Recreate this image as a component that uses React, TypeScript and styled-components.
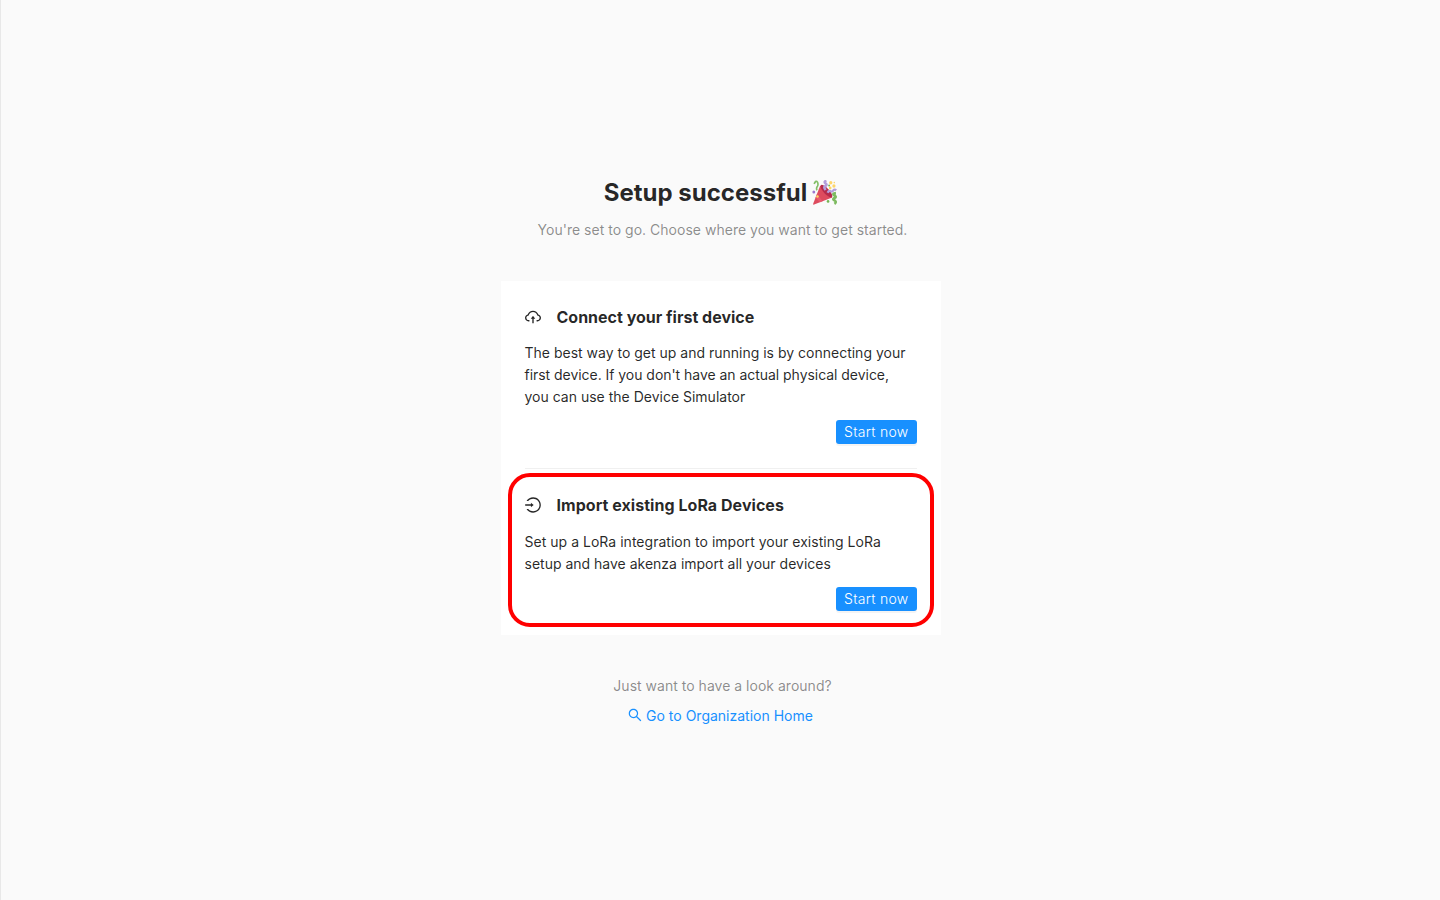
import React from 'react';
import styled, { createGlobalStyle } from 'styled-components';
import { AiOutlineCloudUpload, AiOutlineLogin, AiOutlineSearch } from 'react-icons/ai';

const GlobalStyle = createGlobalStyle`
  *, *::before, *::after { box-sizing: border-box; }
  body {
    margin: 0;
    background: #fafafa;
    color: rgba(0, 0, 0, 0.85);
    font-family: Inter, "Liberation Sans", sans-serif;
    font-size: 14px;
    line-height: 22px;
  }
`;

const Page = styled.main`
  height: 100vh;
  padding-top: 174px;
  border-left: 1px solid #e8e8e8;
  display: flex;
  flex-direction: column;
  align-items: center;
`;

const Title = styled.h1`
  margin: 0;
  height: 38px;
  display: flex;
  align-items: center;
  gap: 5px;
  font-size: 24px;
  line-height: 38px;
  font-weight: 700;
`;

const PartyIcon = styled.svg`
  width: 25px;
  height: 26px;
  display: block;
`;

const Muted = styled.p<{ $top: number }>`
  margin: ${({ $top }) => $top}px 0 0 4px;
  color: rgba(0, 0, 0, 0.45);
  letter-spacing: 0.015px;
`;

const Card = styled.section`
  width: 440px;
  margin-top: 40px;
  padding: 0 24px;
  background: #fff;
`;

const Option = styled.article<{ $marked?: boolean }>`
  position: relative;
  padding: 24px 0;

  & + & { border-top: 1px solid #f0f0f0; }

  ${({ $marked }) => $marked && `
    &::after {
      content: '';
      position: absolute;
      inset: 4px -17px 8px;
      border: 4px solid #ff0000;
      border-radius: 22px;
      pointer-events: none;
    }
  `}
`;

const OptionHeading = styled.h2<{ $gap: number; $tracking?: number }>`
  margin: 0 0 ${({ $gap }) => $gap}px;
  display: flex;
  align-items: center;
  gap: 16px;
  font-size: 16px;
  line-height: 24px;
  font-weight: 700;
  letter-spacing: ${({ $tracking = 0 }) => $tracking}px;

  svg { width: 16px; height: 16px; flex: none; }
`;

const Description = styled.p`
  margin: 0 0 12px;
`;

const Phrase = styled.span<{ $tracking: number }>`
  letter-spacing: ${({ $tracking }) => $tracking}px;
`;

const Actions = styled.div`
  display: flex;
  justify-content: flex-end;
`;

const StartButton = styled.button`
  height: 24px;
  padding: 0 8px;
  border: 0;
  border-radius: 3px;
  background: #1890ff;
  box-shadow: 0 2px 0 rgba(0, 0, 0, 0.045);
  color: #fff;
  font: inherit;
  font-weight: 300;
  letter-spacing: 0.28px;
`;

const HomeLink = styled.a`
  margin-top: 8px;
  display: flex;
  gap: 4px;
  color: #1890ff;
  text-decoration: none;

  svg { width: 14px; height: 14px; margin-top: 3px; }
`;

const ICON_BOX = '64 64 896 896';

const PartyPopper = () => (
  <PartyIcon viewBox="0 0 26 26" preserveAspectRatio="none" aria-hidden="true">
    <path d="M8.6 5.5 L21 17.4 L2.2 24.6 Q.8 25 1.3 23.5Z" fill="#dd4b5e" />
    <path d="M5.2 14 L11 21.2 L8.2 22.3 L3.7 17.6Z" fill="#e85a6d" />
    <ellipse cx="15" cy="11.2" rx="2.8" ry="8.4" transform="rotate(-44 15 11.2)" fill="#b52b4b" />
    <path d="M2.2 3.8 Q4.2-.2 5.7 2.1 Q7 4.7 5.2 7 Q4.2 9 5.4 10.2" fill="none" stroke="#84bf68" strokeWidth="1.7" />
    <path d="M15 .7 Q11.9 1.7 14.2 3.5 Q16.4 5 13.4 6.3 Q12 7.4 14.2 10" fill="none" stroke="#b39ddb" strokeWidth="2.7" />
    <path d="M16.2 12.8 Q17.4 10.2 19.5 11.3 Q21.3 12 22.1 10.4 Q23.4 8.8 25.3 10.2" fill="none" stroke="#b39ddb" strokeWidth="2.2" />
    <path d="M24.9 13.1 Q20.5 13.5 23.2 15.4 Q26.2 16.9 23.3 18 Q20.7 19.2 23.7 20.5 Q26 22 23.3 23.8" fill="none" stroke="#7dba60" strokeWidth="2.6" />
    <g fill="#ffd567">
      <circle cx="19.5" cy="2.8" r="1.7" />
      <circle cx="22.8" cy="6" r="1.7" />
      <circle cx="18.9" cy="8" r="1.4" />
      <circle cx="5.7" cy="16.5" r="1.3" />
    </g>
    <circle cx="1.9" cy="12.1" r="1.5" fill="#9d78d0" />
    <circle cx="17.8" cy="5.5" r="1" fill="#75b756" />
    <circle cx="16.7" cy="21.4" r="1.4" fill="#75b756" />
    <circle cx="23.2" cy="2.6" r=".8" fill="#ffd567" />
  </PartyIcon>
);

export default function App() {
  return (
    <>
      <GlobalStyle />
      <Page>
        <Title>Setup successful<PartyPopper /></Title>
        <Muted $top={7}>You're set to go. Choose where you want to get started.</Muted>
        <Card>
          <Option>
            <OptionHeading $gap={13}><AiOutlineCloudUpload viewBox={ICON_BOX} />Connect your first device</OptionHeading>
            <Description>
              The best way to get up and running is by connecting your{' '}
              <Phrase $tracking={-0.04}>first device. If you don't have an actual physical device,</Phrase>{' '}
              you can use the Device Simulator
            </Description>
            <Actions><StartButton>Start now</StartButton></Actions>
          </Option>
          <Option $marked>
            <OptionHeading $gap={14} $tracking={0.04}><AiOutlineLogin viewBox={ICON_BOX} />Import existing LoRa Devices</OptionHeading>
            <Description>
              <Phrase $tracking={0.026}>Set up a LoRa integration to import your existing LoRa</Phrase>{' '}
              setup and have akenza import all your devices
            </Description>
            <Actions><StartButton>Start now</StartButton></Actions>
          </Option>
        </Card>
        <Muted $top={40}>Just want to have a look around?</Muted>
        <HomeLink href="#"><AiOutlineSearch viewBox={ICON_BOX} />Go to Organization Home</HomeLink>
      </Page>
    </>
  );
}
